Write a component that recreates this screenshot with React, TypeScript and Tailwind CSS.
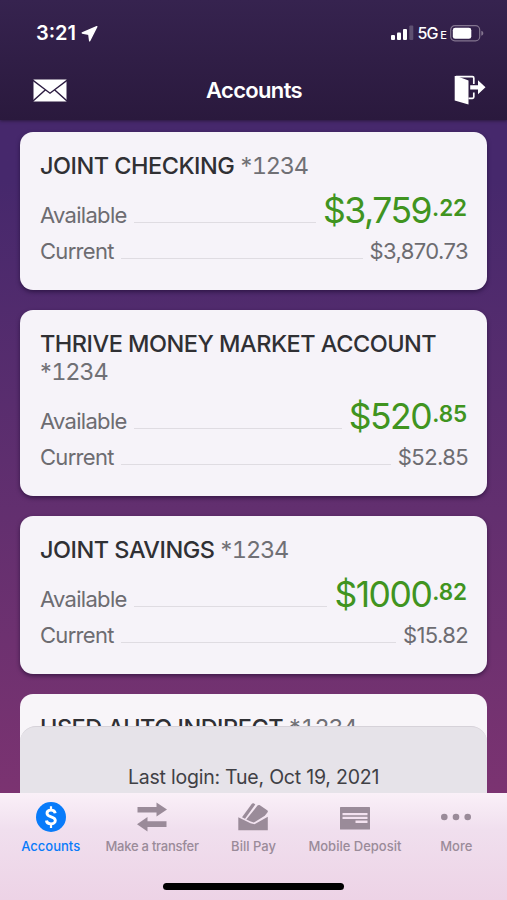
import type { ReactNode } from "react";
import clsx from "clsx";

type Account = {
  name: string;
  mask: string;
  dollars: string;
  cents: string;
  current: string;
};

const accounts: Account[] = [
  { name: "JOINT CHECKING", mask: "1234", dollars: "$3,759", cents: ".22", current: "$3,870.73" },
  { name: "THRIVE MONEY MARKET ACCOUNT", mask: "1234", dollars: "$520", cents: ".85", current: "$52.85" },
  { name: "JOINT SAVINGS", mask: "1234", dollars: "$1000", cents: ".82", current: "$15.82" },
];

function LocationIcon() {
  return (
    <svg width="17" height="17" viewBox="0 0 17 17" fill="currentColor" stroke="currentColor" strokeLinejoin="round">
      <path d="M15.800 1.600 1.300 8l6.500 1.200.9 6.600Z" strokeWidth="1.400" />
    </svg>
  );
}

function SignalIcon() {
  return (
    <svg width="24" height="16" viewBox="0 0 24 16" fill="currentColor">
      <rect x="0" y="10" width="4" height="5" rx="1" />
      <rect x="6" y="7.500" width="4" height="7.500" rx="1" />
      <rect x="12" y="4" width="4" height="11" rx="1" />
      <rect x="18.300" y="0.500" width="4" height="14.500" rx="1" opacity="0.220" />
    </svg>
  );
}

function BatteryIcon() {
  return (
    <svg width="34" height="17" viewBox="0 0 34 17" fill="none">
      <rect x="0.700" y="0.700" width="29" height="15.200" rx="4.200" stroke="#83758f" strokeWidth="1.200" />
      <rect x="2.800" y="2.800" width="18.500" height="11" rx="2.400" fill="#fff" />
      <path d="M31.300 5.800c1.500.5 2 1.500 2 2.500s-.5 2-2 2.500Z" fill="#83758f" />
    </svg>
  );
}

function MailIcon() {
  return (
    <svg width="34" height="23" viewBox="0 0 34 23">
      <rect x="0.500" y="0.500" width="33" height="22" fill="#fff" />
      <path d="M0 1.300 17 14.200 34 1.300M0 22 12.500 10.800M34 22 21.500 10.800" fill="none" stroke="#2c1c41" strokeWidth="1.400" />
    </svg>
  );
}

function LogoutIcon() {
  return (
    <svg width="32" height="31" viewBox="0 0 32 31">
      <path d="M2 1.700h16.500c.8 0 1.300.5 1.300 1.300v6M19.800 17.500V22c0 .8-.5 1.300-1.300 1.300h-4" fill="none" stroke="#fff" strokeWidth="1.700" />
      <path d="M.700.900H2.500L14.500 5.500V29.500L.700 25.500Z" fill="#fff" />
      <path d="M16.200 10.200H24V5.300l7.500 7-7.500 7v-4.800h-7.800Z" fill="#fff" />
    </svg>
  );
}

function AccountsIcon() {
  return (
    <svg width="30" height="30" viewBox="0 0 30 30">
      <circle cx="15" cy="15" r="15" fill="#087bfa" />
      <path d="M19.200 11.200c-.3-2-1.900-3.100-4.200-3.100-2.400 0-4 1.300-4 3.100 0 4.700 8.300 2.600 8.300 7.300 0 2-1.800 3.400-4.300 3.400s-4.300-1.300-4.600-3.400" fill="none" stroke="#fff" strokeWidth="2.900" />
      <path d="M15 4.300V8M15 22v4" stroke="#fff" strokeWidth="2.200" />
    </svg>
  );
}

function TransferIcon() {
  return (
    <svg width="30" height="30" viewBox="0 0 30 30" fill="currentColor">
      <path d="M.5 4.900h19V.5L30 7.500 19.500 14.500v-4H.5ZM29.500 19.200h-19V15L0 22.200l10.500 7.200v-4.500h19Z" />
    </svg>
  );
}

function BillPayIcon() {
  return (
    <svg width="32" height="30" viewBox="0 0 32 30" fill="currentColor">
      <path d="M1.300 15.300 13.500 21.200 17.500 22.200 30.800 14.700V28.300H1.300Z" />
      <path d="M5 15.200 14.700 2c.6-.8 1.500-.9 2.300-.4l1.300.9L8 16.800Z" />
      <path d="M9.300 17.400 20.500 3.600c.7-.8 1.500-.9 2.400-.3L30.200 8.300c.8.700.9 1.500.2 2.200l-2.600 3.300L16.800 20.600 13.700 19.500Z" />
    </svg>
  );
}

function DepositIcon() {
  return (
    <svg width="30" height="30" viewBox="0 0 30 30">
      <rect y="5" width="30" height="22.500" rx="0.500" fill="currentColor" />
      <path d="M2.500 11h25v2.300h-25ZM2.500 14.800h25v2.300h-25ZM15.500 18.600h12v2.300h-12Z" fill="#f3e2f0" />
    </svg>
  );
}

function MoreIcon() {
  return (
    <svg width="30" height="30" viewBox="0 0 30 30" fill="currentColor">
      <circle cx="3.300" cy="15" r="3.300" />
      <circle cx="15" cy="15" r="3.300" />
      <circle cx="26.700" cy="15" r="3.300" />
    </svg>
  );
}

const tabs: { label: string; icon: ReactNode; active?: boolean; tracking?: string }[] = [
  { label: "Accounts", icon: <AccountsIcon />, active: true },
  { label: "Make a transfer", icon: <TransferIcon />, tracking: "tracking-[-0.25px]" },
  { label: "Bill Pay", icon: <BillPayIcon /> },
  { label: "Mobile Deposit", icon: <DepositIcon /> },
  { label: "More", icon: <MoreIcon /> },
];

function AccountTitle({ name, mask }: { name: string; mask: string }) {
  return (
    <h2 className="text-[23.5px] leading-7 tracking-[-0.5px] text-[#303034]">
      <span className="font-medium">{name}</span>{" "}
      <span className="inline-block text-[#707075]">
        *<span className="tracking-[-1.2px] tabular-nums">{mask}</span>
      </span>
    </h2>
  );
}

function AccountCard({ account }: { account: Account }) {
  return (
    <section className="rounded-[13px] bg-[#f6f3f9] px-5 pt-[20px] pb-[19px] shadow-[0_2px_4px_rgba(20,5,40,0.55)]">
      <AccountTitle name={account.name} mask={account.mask} />
      <div className="mt-[10px] flex h-[41px] items-baseline text-[#6d6c71]">
        <span className="text-[22px] leading-[42px] tracking-[-0.7px]">Available</span>
        <span className="mx-[7px] h-px flex-1 bg-[#dfdce2]" />
        <span className="flex items-start text-[#409420]">
          <span className="text-[35.5px] leading-[42px] tracking-[-1.5px]">{account.dollars}</span>
          <span className="pt-[4px] pl-[1px] text-[22.5px] leading-[28px] font-semibold tracking-[-0.1px]">{account.cents}</span>
        </span>
      </div>
      <div className="flex h-10 items-baseline text-[22px] leading-10 tracking-[-0.7px] text-[#6d6c71]">
        <span>Current</span>
        <span className="mx-[7px] h-px flex-1 bg-[#dfdce2]" />
        <span className="-mr-[1px] tracking-[-0.6px]">{account.current}</span>
      </div>
    </section>
  );
}

export default function App() {
  return (
    <div className="flex h-[900px] w-[507px] flex-col overflow-hidden bg-linear-to-b from-[#46286c] from-20% to-[#7b3371] to-88% font-['Inter',sans-serif]">
      <header className="h-[120px] shrink-0 bg-linear-to-b from-[#36234f] to-[#2a193d] text-white shadow-[0_1px_3px_#2a193d]">
        <div className="flex h-[66px] items-center pr-[23px] pl-9">
          <span className="text-[20px] font-semibold">3:21</span>
          <span className="ml-[5px]"><LocationIcon /></span>
          <span className="ml-auto"><SignalIcon /></span>
          <span className="ml-[3px] flex items-baseline font-medium">
            <span className="text-[16px] tracking-[-1px]">5G</span>
            <span className="ml-[3px] text-[11px]">E</span>
          </span>
          <span className="ml-[3px]"><BatteryIcon /></span>
        </div>
        <div className="grid h-[48px] grid-cols-3 items-center pr-[21px] pl-[33px]">
          <button aria-label="Messages"><MailIcon /></button>
          <h1 className="-ml-[11px] text-center text-[22px] font-semibold tracking-[-0.65px]">Accounts</h1>
          <button aria-label="Log out" className="justify-self-end"><LogoutIcon /></button>
        </div>
      </header>

      <main className="relative h-[673px] shrink-0 overflow-hidden px-[20px] pt-[12px]">
        <div className="flex flex-col gap-5">
          {accounts.map((a) => (
            <AccountCard key={a.name} account={a} />
          ))}
          <section className="h-[130px] rounded-[13px] bg-[#f8f5f9] px-5 pt-[20px]">
            <AccountTitle name="USED AUTO INDIRECT" mask="1234" />
          </section>
        </div>
        <div className="absolute inset-x-[20px] bottom-0 h-[67px] rounded-t-[16px] border-t border-[#d6d2d9] bg-[#e6e3e9] pt-[36px] text-center text-[19.5px] leading-[28px] tracking-[-0.22px] text-[#404045]">
          Last login: Tue, Oct 19, 2021
        </div>
      </main>

      <nav className="flex h-[107px] shrink-0 flex-col items-center bg-linear-to-b from-[#faf0f8] via-[#f0dfee] via-35% to-[#edd3e6]">
        <div className="grid w-full grid-cols-5 pt-[9px]">
          {tabs.map((tab) => (
            <button key={tab.label} className={clsx("flex flex-col items-center", tab.active ? "text-[#087bfa]" : "text-[#9a8b99]")}>
              {tab.icon}
              <span className={clsx("mt-[5px] text-[13px] leading-[18px] font-medium whitespace-nowrap", tab.tracking)}>{tab.label}</span>
            </button>
          ))}
        </div>
        <div className="mt-[28px] h-[7px] w-[181px] rounded-full bg-black" />
      </nav>
    </div>
  );
}
